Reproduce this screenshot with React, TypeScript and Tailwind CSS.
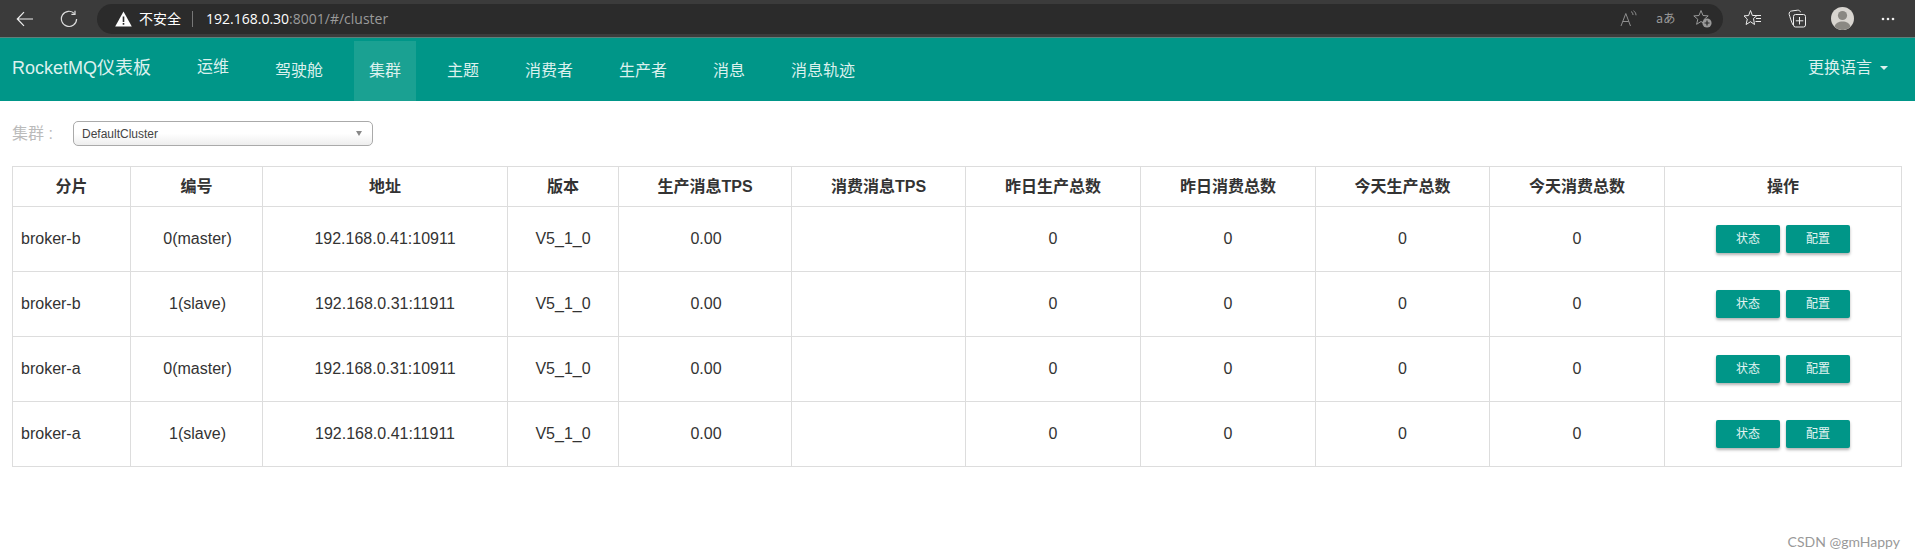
import React from "react";

const tabs = [
  { label: "运维", cls: "pb-[8px]" },
  { label: "驾驶舱", cls: "" },
  { label: "集群", cls: "bg-[#1aa192]" },
  { label: "主题", cls: "" },
  { label: "消费者", cls: "" },
  { label: "生产者", cls: "" },
  { label: "消息", cls: "" },
  { label: "消息轨迹", cls: "" },
];

const columns = [
  { title: "分片", cls: "w-[118px]" },
  { title: "编号", cls: "w-[132px]" },
  { title: "地址", cls: "w-[245px]" },
  { title: "版本", cls: "w-[111px]" },
  { title: "生产消息TPS", cls: "w-[173px]" },
  { title: "消费消息TPS", cls: "w-[174px]" },
  { title: "昨日生产总数", cls: "w-[175px]" },
  { title: "昨日消费总数", cls: "w-[175px]" },
  { title: "今天生产总数", cls: "w-[174px]" },
  { title: "今天消费总数", cls: "w-[175px]" },
  { title: "操作", cls: "w-[237px]" },
];

const brokers = [
  { name: "broker-b", no: "0(master)", addr: "192.168.0.41:10911" },
  { name: "broker-b", no: "1(slave)", addr: "192.168.0.31:11911" },
  { name: "broker-a", no: "0(master)", addr: "192.168.0.31:10911" },
  { name: "broker-a", no: "1(slave)", addr: "192.168.0.41:11911" },
];

function BrowserBar() {
  return (
    <div className="flex h-[37px] items-center bg-[#3b3b3b] font-['Open_Sans','Noto_Sans_CJK_SC',sans-serif] text-[14px] text-white">
      <svg className="ml-[16px] h-[18px] w-[18px]" viewBox="0 0 18 18" fill="none" stroke="#eee" strokeWidth="1.2">
        <path d="M17 9H1.5M8 2.2 1.3 9 8 15.8" />
      </svg>
      <svg className="ml-[26px] h-[18px] w-[18px]" viewBox="0 0 18 18" fill="none" stroke="#ddd" strokeWidth="1.2">
        <path d="M14.5 3.6A7.6 7.6 0 1 0 16.6 9" />
        <path d="M15 .8v3.6h-3.6" />
      </svg>
      <div className="ml-[19px] flex h-[30px] flex-1 items-center rounded-full bg-[#2b2b2b]">
        <svg className="ml-[18px] h-[16px] w-[17px]" viewBox="0 0 17 16">
          <path d="M8.5.5 16.8 15.500H.2z" fill="#fff" />
          <path d="M7.700 5.500h1.600v5.500H7.700zM7.700 12h1.600v1.700H7.700z" fill="#2b2b2b" />
        </svg>
        <span className="ml-[7px]">不安全</span>
        <span className="ml-[11px] h-[16px] w-px bg-[#777]" />
        <span className="ml-[13px]">
          192.168.0.30<span className="text-[#9a9a9a]">:8001/#/cluster</span>
        </span>
        <div className="ml-auto mr-[11px] flex items-center gap-[19px]">
          <svg className="h-[18px] w-[17px]" viewBox="0 0 17 18" fill="none" stroke="#8f8f8f" strokeWidth="1">
            <path d="M1 16 5.800 3.500 10.500 16M2.800 11.500h6" />
            <path d="M11 1.500c1.400.8 2 2 2 3.500M13.500 .8c1.600 1 2.500 2.500 2.500 4.500" />
          </svg>
          <span className="w-[18px] whitespace-nowrap text-center font-['Noto_Sans_CJK_JP',sans-serif] text-[12.5px] leading-none text-[#999]">aあ</span>
          <svg className="h-[19px] w-[19px]" viewBox="0 0 19 19">
            <path d="M8 1.500 10 6.500l5.200.4-4 3.400 1.200 5-4.400-2.800-4.400 2.800 1.200-5-4-3.400 5.200-.4z" fill="none" stroke="#999" strokeWidth="1" />
            <circle cx="14" cy="14" r="4.600" fill="#999" />
            <path d="M14 11.500v5M11.500 14h5" stroke="#2b2b2b" strokeWidth="1.200" />
          </svg>
        </div>
      </div>
      <div className="ml-[20px] mr-[20px] flex items-center">
        <svg className="h-[19px] w-[19px]" viewBox="0 0 19 19" fill="none" stroke="#eee" strokeWidth="1">
          <path d="M7.500 1.500 9.400 6.500H14l-3.500 3 1 6-4-2.800-4.400 2.800 1.200-5.400L1 6.900l4.600-.4z" />
          <path d="M13 9.500h5M12.500 12.500h5.500M13.500 6.500h4.500" />
        </svg>
        <svg className="ml-[26px] h-[19px] w-[18px]" viewBox="0 0 18 19" fill="none" stroke="#eee" strokeWidth="1">
          <path d="M5 16C3 12 2 8 1.200 5.500 .8 3.500 2 2.200 3.500 2l6-.8c1.500-.2 2.500.5 3 2" />
          <rect x="5.500" y="5.500" width="12" height="12.500" rx="2" />
          <path d="M11.500 8v7.500M7.800 11.800h7.500" />
        </svg>
        <svg className="ml-[25px] h-[23px] w-[23px]" viewBox="0 0 23 23">
          <circle cx="11.500" cy="11.500" r="11.500" fill="#d8d5d0" />
          <circle cx="11.500" cy="8.500" r="4.600" fill="#8a8883" />
          <path d="M3.500 19.800c1-3.800 4-5.300 8-5.300s7 1.500 8 5.300a11.500 11.500 0 0 1-16 0z" fill="#8a8883" />
        </svg>
        <svg className="ml-[27px] h-[4px] w-[14px]" viewBox="0 0 14 4" fill="#eee">
          <circle cx="2" cy="2" r="1.300" />
          <circle cx="7" cy="2" r="1.300" />
          <circle cx="12" cy="2" r="1.300" />
        </svg>
      </div>
    </div>
  );
}

function NavBar() {
  return (
    <nav className="flex h-[64px] items-end border-t border-[#5f7f7a] bg-[#009688] text-[16px] text-[#dcf1ee]">
      <div className="mb-[2px] ml-[12px] w-[170px] self-center text-[18px]">RocketMQ仪表板</div>
      <ul className="flex gap-[16px]">
        {tabs.map((t) => (
          <li key={t.label} className={"flex h-[60px] items-center px-[15px] " + t.cls}>
            {t.label}
          </li>
        ))}
      </ul>
      <div className="mb-[4px] ml-auto mr-[27px] flex items-center gap-[8px] self-center">
        更换语言
        <span className="h-0 w-0 border-x-[4px] border-t-[4px] border-x-transparent border-t-[#dcf1ee]" />
      </div>
    </nav>
  );
}

function BrokerTable() {
  return (
    <table className="mt-[20px] w-[1889px] table-fixed border-collapse text-[#333]">
      <colgroup>
        {columns.map((c) => (
          <col key={c.title} className={c.cls} />
        ))}
      </colgroup>
      <thead>
        <tr className="h-[40px]">
          {columns.map((c) => (
            <th key={c.title} className="border border-[#ddd] p-0 text-center text-[16px] font-bold">
              {c.title}
            </th>
          ))}
        </tr>
      </thead>
      <tbody className="text-[16px]">
        {brokers.map((b) => (
          <tr key={b.name + b.no} className="h-[65px]">
            <td className="border border-[#ddd] px-[8px] pb-[1px]">{b.name}</td>
            <td className="border border-[#ddd] pb-[1px] pl-[2px] text-center">{b.no}</td>
            <td className="border border-[#ddd] pb-[1px] text-center">{b.addr}</td>
            <td className="border border-[#ddd] pb-[1px] text-center">V5_1_0</td>
            <td className="border border-[#ddd] pb-[1px] pl-[2px] text-center">0.00</td>
            <td className="border border-[#ddd] text-center"></td>
            <td className="border border-[#ddd] pb-[1px] text-center">0</td>
            <td className="border border-[#ddd] pb-[1px] text-center">0</td>
            <td className="border border-[#ddd] pb-[1px] text-center">0</td>
            <td className="border border-[#ddd] pb-[1px] text-center">0</td>
            <td className="border border-[#ddd] text-center">
              <div className="flex justify-center gap-[6px]">
                <button className="h-[28px] w-[64px] rounded-[2px] bg-[#009688] text-[12px] text-[#e3f4f2] shadow-[0_2px_3px_rgba(0,0,0,0.3)]">状态</button>
                <button className="h-[28px] w-[64px] rounded-[2px] bg-[#009688] text-[12px] text-[#e3f4f2] shadow-[0_2px_3px_rgba(0,0,0,0.3)]">配置</button>
              </div>
            </td>
          </tr>
        ))}
      </tbody>
    </table>
  );
}

export default function App() {
  return (
    <div className="relative h-[560px] bg-white font-['Liberation_Sans','Noto_Sans_CJK_SC',sans-serif]">
      <BrowserBar />
      <NavBar />
      <main className="px-[12px]">
        <div className="mt-[20px] flex h-[25px] items-center">
          <span className="w-[61px] text-[16px] text-[#bbb]">集群 :</span>
          <div className="flex h-[25px] w-[300px] items-center justify-between rounded-[5px] border border-[#aaa] bg-gradient-to-b from-white from-50% to-[#eeeeee] pl-[8px] pr-[10px] text-[12px] text-[#444]">
            DefaultCluster
            <span className="h-0 w-0 border-x-[3.5px] border-t-[5px] border-x-transparent border-t-[#888]" />
          </div>
        </div>
        <BrokerTable />
      </main>
      <div className="absolute bottom-[8px] right-[15px] font-['Lato',sans-serif] text-[14px] text-[#999]">CSDN @gmHappy</div>
    </div>
  );
}
